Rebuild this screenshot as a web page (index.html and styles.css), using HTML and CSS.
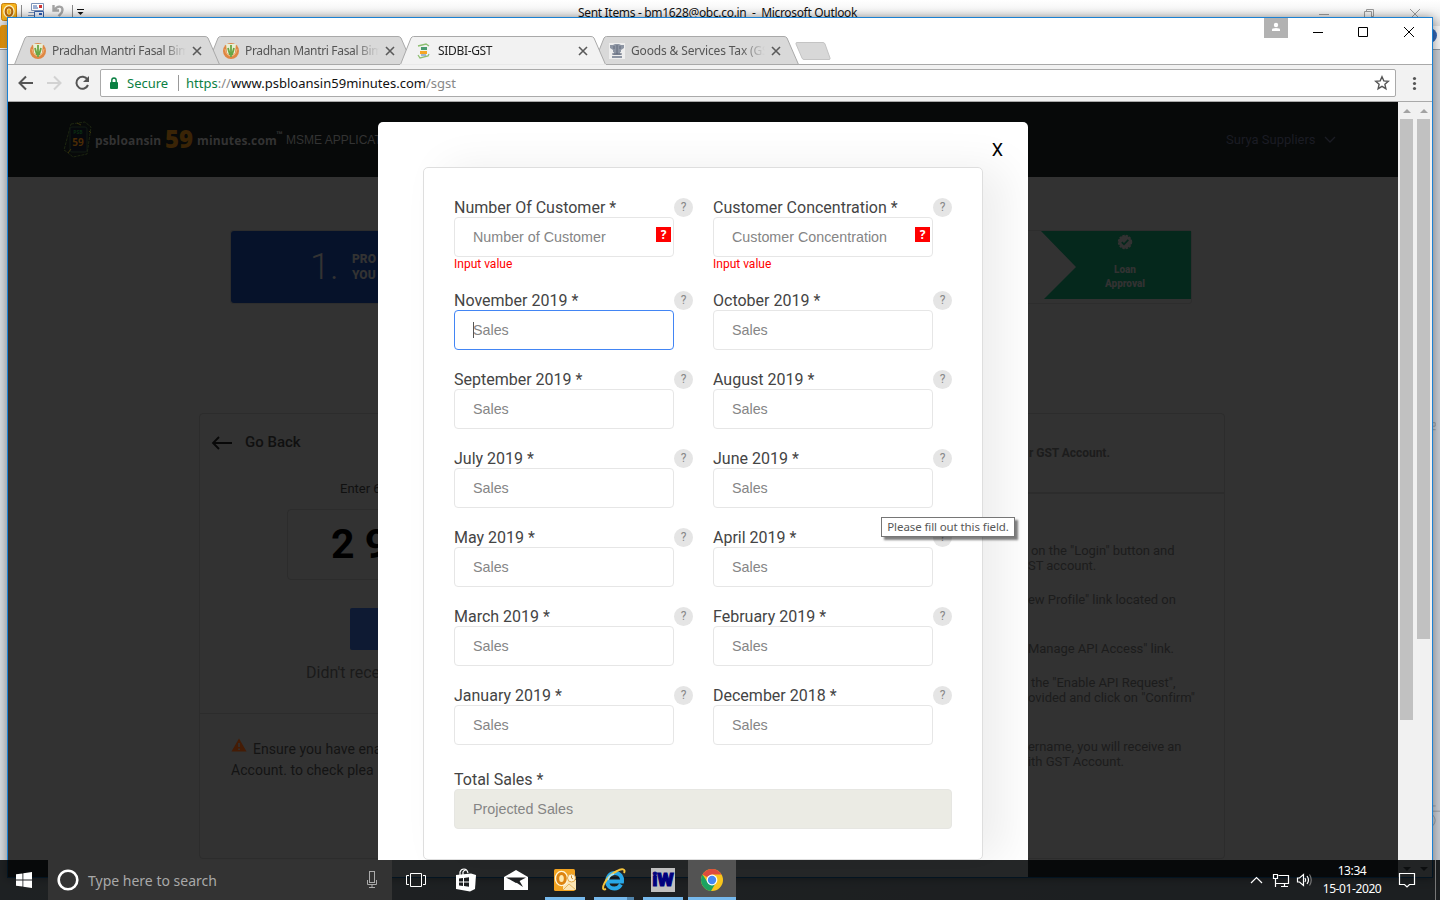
FILE: index.html
```
<!DOCTYPE html>
<html lang="en">
<head>
<meta charset="utf-8">
<title>SIDBI-GST</title>
<link rel="stylesheet" href="styles.css">
</head>
<body>
<div class="desktop">

  <div class="outlook">
    <div class="outlook-title">
      <svg class="outlook-icons" width="90" height="26" viewBox="0 0 90 26">
        <rect x="1.5" y="3.5" width="15" height="17" rx="2" fill="#f5b21b" stroke="#c77f0e"/>
        <ellipse cx="9" cy="11.500" rx="3.700" ry="4.500" fill="none" stroke="#fff6c8" stroke-width="4"/>
        <ellipse cx="9" cy="11.500" rx="3.300" ry="4.200" fill="none" stroke="#b8690a" stroke-width="2.200"/>
        <path d="M21.500 5v14M72.500 5v14" stroke="#8a8a8a"/>
        <path d="M31.500 3.500h12v7h-12zM28.500 12.500h6M28 15.500h7" fill="#fff" stroke="#7b93b8"/>
        <path d="M33 6h4M33 8h5" stroke="#3b62a8"/><rect x="39" y="5" width="3" height="3" fill="#c33"/>
        <path d="M34.500 11.500h9v8h-9z" fill="#e9effa" stroke="#3b62a8"/><rect x="39" y="13" width="3" height="2" fill="#2b58b0"/>
        <path d="M53.500 5v5.500H59M54.500 10c3-5 8-4 8 0 0 3-2 4-4 6" fill="none" stroke="#a3a3a3" stroke-width="2.400"/>
        <path d="M77 9.500h7" stroke="#111"/><path d="M77.500 12h6l-3 3z" fill="#111"/>
      </svg>
      <span class="outlook-text">Sent Items - bm1628@obc.co.in &nbsp;-&nbsp; Microsoft Outlook</span>
      <svg class="outlook-controls" width="120" height="26" viewBox="0 0 120 26" fill="none" stroke="#9a9a9a">
        <path d="M9 14.500h10M54.500 11.500h7v7h-7zM56.500 11V9.500h7v7H62M100 9l10 10M110 9l-10 10"/>
      </svg>
    </div>
    <div class="outlook-ribbon"></div>
    <div class="outlook-file"></div>
    <div class="outlook-help"></div>
    <svg class="outlook-edge" width="8" height="460" viewBox="0 0 8 460" fill="none" stroke="#8f969d"><path d="M0 4.500h2.500v4H0M0 12.500h3M0 442.500h3M0 448.500h8"/><path d="M0 453q5 6 0 12"/></svg>
  </div>

  <div class="chrome">
    <div class="titlebar">
      <div class="tabs">
        <div class="tab tab-first">
          <svg class="tab-shape" width="206" height="29" viewBox="0 0 206 29"><path d="M.5 28.500L11 2Q12 .5 13.500.5H191Q193 .5 194 2L205.500 28.500z"/></svg>
          <svg class="favicon" viewBox="0 0 16 16"><circle cx="8" cy="8" r="8" fill="#df8742"/><path d="M3 1h10l-1 9-4 4-4-4z" fill="#e8efd5"/><path d="M8 2v12M5 5l2 7M11 5l-2 7" stroke="#6aa544" stroke-width="1.800"/><path d="M2 6q1 6 5 7M14 6q-1 6-5 7" fill="none" stroke="#f2b27c"/></svg>
          <span class="tab-name">Pradhan Mantri Fasal Bim</span>
          <svg class="tab-x" viewBox="0 0 10 10"><path d="M1 1l8 8M9 1L1 9"/></svg>
        </div>
        <div class="tab tab-second">
          <svg class="tab-shape" width="206" height="29" viewBox="0 0 206 29"><path d="M.5 28.500L11 2Q12 .5 13.500.5H191Q193 .5 194 2L205.500 28.500z"/></svg>
          <svg class="favicon" viewBox="0 0 16 16"><circle cx="8" cy="8" r="8" fill="#df8742"/><path d="M3 1h10l-1 9-4 4-4-4z" fill="#e8efd5"/><path d="M8 2v12M5 5l2 7M11 5l-2 7" stroke="#6aa544" stroke-width="1.800"/><path d="M2 6q1 6 5 7M14 6q-1 6-5 7" fill="none" stroke="#f2b27c"/></svg>
          <span class="tab-name">Pradhan Mantri Fasal Bim</span>
          <svg class="tab-x" viewBox="0 0 10 10"><path d="M1 1l8 8M9 1L1 9"/></svg>
        </div>
        <div class="tab tab-active">
          <svg class="tab-shape" width="206" height="30" viewBox="0 0 206 30"><path d="M.5 28.500L11 2Q12 .5 13.500.5H191Q193 .5 194 2L205.500 28.500"/><path d="M0 29h206" class="tab-join"/></svg>
          <svg class="favicon" viewBox="0 0 16 16"><path d="M2 3l8-2 3 2M2 12l2 3 8-2 1-2" fill="none" stroke="#8dbf70" stroke-width="1.300"/><path d="M4 4h8l-1 8H4z" fill="#eef6e5"/><rect x="5" y="4" width="6" height="3" fill="#4a9a70"/><rect x="4" y="8" width="7" height="3" fill="#f5a623"/><path d="M5 12h5" stroke="#4c78b5"/></svg>
          <span class="tab-name">SIDBI-GST</span>
          <svg class="tab-x" viewBox="0 0 10 10"><path d="M1 1l8 8M9 1L1 9"/></svg>
        </div>
        <div class="tab tab-fourth">
          <svg class="tab-shape" width="206" height="29" viewBox="0 0 206 29"><path d="M.5 28.500L11 2Q12 .5 13.500.5H191Q193 .5 194 2L205.500 28.500z"/></svg>
          <svg class="favicon" viewBox="0 0 16 16"><path d="M0 0h16v16H0z" fill="#eee"/><path d="M1 2h3l2-1h4l2 1h3v3l-3 2v2h-1l1 3H4l1-3H4V7L1 5zM3 13h10v2H3z" fill="#8d95a3"/><path d="M5 3v3M11 3v3M8 2v9M3 11h10" stroke="#626b7c"/></svg>
          <span class="tab-name">Goods &amp; Services Tax (GS</span>
          <svg class="tab-x" viewBox="0 0 10 10"><path d="M1 1l8 8M9 1L1 9"/></svg>
        </div>
        <svg class="new-tab" width="36" height="19" viewBox="0 0 36 19"><path d="M2 .5h26q1.500 0 2 1.500l5 14q.5 1.500-1 1.500H9q-1.500 0-2-1.500L1 2Q.5.500 2 .5z" fill="#d8d8d8" stroke="#c4c4c4"/></svg>
      </div>
      <div class="window-controls">
        <svg class="profile" width="24" height="20" viewBox="0 0 24 20"><path d="M0 0h24v20H0z" fill="#b2b2b2"/><circle cx="12" cy="7" r="2.200" fill="#fff"/><path d="M8 13v-1.500q0-1.500 4-1.500t4 1.500V13z" fill="#fff"/></svg>
        <svg class="window-buttons" width="120" height="30" viewBox="0 0 120 30" fill="none" stroke="#000"><path d="M5 14.500h10M50.500 9.500h9v9h-9zM96 9l10 10M106 9L96 19"/></svg>
      </div>
    </div>

    <div class="toolbar">
      <svg class="nav-icons" width="92" height="36" viewBox="0 0 92 36" fill="none" stroke="#555" stroke-width="2"><path d="M25 18H12M18 11.500L11.500 18l6.500 6.500"/><path d="M39 18h13M46 11.500l6.500 6.500-6.500 6.500" stroke="#d2d2d2"/><path d="M79.500 14.500A6 6 0 1 0 80 20"/><path d="M81 11v6h-6z" fill="#555" stroke="none"/></svg>
      <div class="address">
        <svg class="lock" width="10" height="13" viewBox="0 0 10 13"><rect x="1" y="5" width="8" height="7" rx="1" fill="#0b8043"/><path d="M2.800 5V3.200a2.200 2.200 0 0 1 4.400 0V5" fill="none" stroke="#0b8043" stroke-width="1.400"/></svg>
        <span class="secure">Secure</span>
        <span class="address-sep"></span>
        <span class="url"><b class="scheme">https</b><i>://</i>www.psbloansin59minutes.com<i>/sgst</i></span>
        <svg class="star" width="16" height="16" viewBox="0 0 16 16"><path d="M8 1.800l1.800 4.100 4.500.4-3.400 3 1 4.400L8 11.400l-3.900 2.300 1-4.400-3.400-3 4.500-.4z" fill="none" stroke="#555" stroke-width="1.400"/></svg>
      </div>
      <svg class="menu-dots" width="36" height="36" viewBox="0 0 36 36" fill="#555"><circle cx="18.500" cy="13.500" r="1.600"/><circle cx="18.500" cy="18.500" r="1.600"/><circle cx="18.500" cy="23.500" r="1.600"/></svg>
    </div>

    <div class="viewport">
      <div class="page">
        <header class="site-header">
          <svg class="logo" width="30" height="38" viewBox="0 0 30 38" fill="none"><path d="M8 3l14-2 6 5-4 27-14 3L4 31 1 29z" stroke="#1c2510" stroke-dasharray="3 1"/><rect x="7" y="6" width="17" height="25" rx="2" fill="#06080c" stroke="#101a13"/><path d="M5 32l3-4M26 10l2 2M14 2l4 2" stroke="#39330a"/><text x="15" y="13" class="logo-psb">PSB</text><text x="15" y="25" class="logo-59">59</text></svg>
          <span class="brand-a">psbloansin</span>
          <span class="brand-n">59</span>
          <span class="brand-b">minutes.com</span>
          <span class="brand-tm">™</span>
          <span class="brand-app">MSME APPLICAT</span>
          <span class="user">Surya Suppliers</span>
          <svg class="chev" width="12" height="8" viewBox="0 0 12 8"><path d="M1 1l5 5 5-5" fill="none" stroke="#1b1c24" stroke-width="1.300"/></svg>
        </header>

        <div class="steps">
          <div class="step-one"><span class="step-num">1.</span><span class="step-text">PRO<br>YOU</span></div>
          <div class="step-last">
            <svg class="step-badge" width="16" height="16" viewBox="0 0 16 16"><circle cx="8" cy="8" r="6.500" fill="#323232" stroke="#323232" stroke-width="1.500" stroke-dasharray="2.400 1"/><path d="M4.800 8.200l2.200 2.200 4.300-4.500" fill="none" stroke="#05281c" stroke-width="1.700"/></svg>
            <span>Loan<br>Approval</span>
          </div>
        </div>

        <div class="cards">
          <section class="otp">
            <div class="go-back"><svg width="22" height="16" viewBox="0 0 22 16" fill="none" stroke="#080808" stroke-width="1.800"><path d="M21 9H2M8 3L2 9l6 6"/></svg><span>Go Back</span></div>
            <div class="otp-label">Enter 6</div>
            <div class="otp-box">2 9</div>
            <div class="otp-button"></div>
            <div class="otp-resend">Didn't rece</div>
            <div class="otp-note"><svg width="16" height="14" viewBox="0 0 16 14"><path d="M8 .5L15.500 13.500H.5z" fill="#451c05"/><path d="M8 5v4M8 10.500v1.500" stroke="#323232" stroke-width="1.600"/></svg>Ensure you have ena<br>Account. to check plea</div>
          </section>
          <section class="guide">
            <h2>r GST Account.</h2>
            <div class="guide-list">
              <p><span class="nudge">on the "Login" button and</span><br>ST account.</p>
              <p>ew Profile" link located on</p>
              <p class="later">Manage API Access" link.</p>
              <p><span class="nudge">the "Enable API Request",</span><br>ovided and click on "Confirm"</p>
              <p class="later">ername, you will receive an<br>ith GST Account.</p>
            </div>
          </section>
        </div>

        <div class="modal">
          <span class="modal-close">X</span>
          <div class="form-card">
            <div class="fields">
              <div class="field"><label>Number Of Customer *</label><span class="help">?</span><div class="input">Number of Customer<b class="flag">?</b></div><em>Input value</em></div>
              <div class="field"><label>Customer Concentration *</label><span class="help">?</span><div class="input">Customer Concentration<b class="flag">?</b></div><em>Input value</em></div>
              <div class="field"><label>November 2019 *</label><span class="help">?</span><div class="input focused"><i class="caret"></i>Sales</div></div>
              <div class="field"><label>October 2019 *</label><span class="help">?</span><div class="input">Sales</div></div>
              <div class="field"><label>September 2019 *</label><span class="help">?</span><div class="input">Sales</div></div>
              <div class="field"><label>August 2019 *</label><span class="help">?</span><div class="input">Sales</div></div>
              <div class="field"><label>July 2019 *</label><span class="help">?</span><div class="input">Sales</div></div>
              <div class="field"><label>June 2019 *</label><span class="help">?</span><div class="input">Sales</div></div>
              <div class="field"><label>May 2019 *</label><span class="help">?</span><div class="input">Sales</div></div>
              <div class="field"><label>April 2019 *</label><span class="help">?</span><div class="input">Sales</div></div>
              <div class="field"><label>March 2019 *</label><span class="help">?</span><div class="input">Sales</div></div>
              <div class="field"><label>February 2019 *</label><span class="help">?</span><div class="input">Sales</div></div>
              <div class="field"><label>January 2019 *</label><span class="help">?</span><div class="input">Sales</div></div>
              <div class="field"><label>December 2018 *</label><span class="help">?</span><div class="input">Sales</div></div>
            </div>
            <div class="total"><label>Total Sales *</label><div class="input projected">Projected Sales</div></div>
          </div>
        </div>
      </div>
      <div class="scroll scroll-inner"><i class="arrow-up"></i><div class="thumb"></div><i class="arrow-down"></i></div>
      <div class="scroll scroll-outer"><i class="arrow-up"></i><div class="thumb"></div><i class="arrow-down"></i></div>
    </div>
  </div>

  <div class="tooltip">Please fill out this field.</div>

  <div class="taskbar">
    <div class="start"><svg width="16" height="16" viewBox="0 0 16 16" fill="#fff"><path d="M0 2.300l6.500-.9v6.200H0zM7.300 1.300L16 0v7.600H7.300zM0 8.400h6.500v6.200L0 13.700zM7.300 8.400H16V16l-8.700-1.300z"/></svg></div>
    <div class="search">
      <svg width="22" height="22" viewBox="0 0 22 22"><circle cx="11" cy="11" r="9.300" fill="none" stroke="#fff" stroke-width="2.600"/></svg>
      <span>Type here to search</span>
      <svg class="mic" width="12" height="18" viewBox="0 0 12 18" fill="none" stroke="#aaa"><rect x="3.500" y=".5" width="5" height="11"/><path d="M1.500 9v4.500h9V9M6 14v3M3 16.500h6"/></svg>
    </div>
    <div class="app"><svg width="22" height="16" viewBox="0 0 22 16" fill="none" stroke="#fff"><path d="M5.500 1.500h11v13h-11zM4 3.500H1.500v9H4M18 3.500h2.500v9H18"/></svg></div>
    <div class="app"><svg width="22" height="24" viewBox="0 0 22 24"><path d="M5 8V4q1-3 4-3t4 4M8 7V4q1-2 3-2" fill="none" stroke="#fff" stroke-width="1.200"/><path d="M1 7l15-1.500 5 1.500-1 14-5 2.500L1 21z" fill="#fff"/><path d="M4 10.500l4-.5v3.500H4zM9 9.900l5-.6v4.200H9zM4 14.500h4V18l-4-.5zM9 14.500h5v4.200l-5-.6z" fill="#1c1e20"/></svg></div>
    <div class="app"><svg width="26" height="22" viewBox="0 0 26 22"><path d="M1 8L13 1l12 7v13H1z" fill="#fff"/><path d="M3 8.500h20L13 14z" fill="#1e2022"/><path d="M11 12l9 6-4-7z" fill="#1e2022"/></svg></div>
    <div class="app running outlook-app"><svg width="24" height="24" viewBox="0 0 24 24"><rect x="1" y="1" width="21" height="22" rx="1.500" fill="#f2a321"/><path d="M10 12h13v10H10z" fill="#fbe5b4"/><path d="M10 22l6-6 7 6" fill="none" stroke="#e5b65e"/><ellipse cx="8.500" cy="10.500" rx="4.200" ry="5.200" fill="none" stroke="#fff7d8" stroke-width="5"/><ellipse cx="8.500" cy="10.500" rx="3.800" ry="5" fill="#ffe9ad" stroke="#dd8410" stroke-width="3"/><circle cx="18.500" cy="10" r="4" fill="#fff4d6" stroke="#e1a646"/><path d="M18.500 7.500V10l1.500 1" fill="none" stroke="#d18a25"/></svg></div>
    <div class="app running stacked"><svg width="26" height="26" viewBox="0 0 26 26" fill="none"><path d="M20 17.500C18.500 20 16.500 21.500 13.500 21.500C8.500 21.500 6 18 6 14S9 6 14 6s7.500 4 7 8.500H8" stroke="#28a8e8" stroke-width="4"/><path d="M5 22C-2 25 4 10 16 4c5-3 9-2 7 2" stroke="#f4c33c" stroke-width="2"/><path d="M7 13q1-5 6-6" stroke="#9be3ff" stroke-width="1.500"/></svg></div>
    <div class="app running"><div class="iw">iW</div></div>
    <div class="app running current"><svg width="24" height="24" viewBox="0 0 24 24"><circle cx="12" cy="12" r="11" fill="#f8c51c"/><path d="M12 12L2.500 6.500A11 11 0 0 1 21.500 6.500H12z" fill="#dd4b3e"/><path d="M2.500 6.500A11 11 0 0 0 11 23l5-8.500L7.500 14z" fill="#1ca261"/><circle cx="12" cy="12" r="5.400" fill="#fff"/><circle cx="12" cy="12" r="4.200" fill="#4688f1"/></svg></div>
    <div class="tray">
      <svg width="62" height="18" viewBox="0 0 62 18" fill="none" stroke="#fff" stroke-width="1.200"><path d="M1 12l5.500-5.500L12 12"/><path d="M28.500 4.500H38.500v8H26M31 15.500h7M34.500 13v2.500M23.500 3.500h4v4h-4zM25.500 8v8"/><path d="M47.500 7v4h2l4 3.500V3.500l-4 3.500zM55 7q1.500 2 0 4M57 5q3 4 0 8"/><path d="M59.500 3.500q3.500 5.500 0 11" stroke="#777"/></svg>
      <div class="clock">13:34<br>15-01-2020</div>
      <svg class="notify" width="18" height="18" viewBox="0 0 18 18" fill="none" stroke="#fff" stroke-width="1.200"><path d="M1.500 2.500h15v11h-5L9 16l-2.500-2.500h-5z"/></svg>
      <i class="show-desktop"></i>
    </div>
  </div>
</div>
</body>
</html>
```
FILE: styles.css
```
* { box-sizing: border-box; }
body { margin: 0; font-family: Roboto, "Liberation Sans", sans-serif; }
svg { display: block; flex: none; }
i, em { font-style: normal; }
.desktop { position: relative; width: 1440px; height: 900px; overflow: hidden; background: #c9ced4; }

/* Outlook window at the back */
.outlook { position: absolute; inset: 0; background: linear-gradient(90deg, #d5dade, #c4c9d0 99%); }
.outlook-title { display: flex; justify-content: space-between; height: 26px; background: linear-gradient(#fff, #f1f1f1 60%, #dcdcdc); }
.outlook-text { width: 290px; margin-left: 46px; font: 12px/26px "Noto Sans", sans-serif; letter-spacing: -.32px; color: #111; white-space: nowrap; }
.outlook-controls { margin-right: 10px; }
.outlook-ribbon { height: 24px; background: #f2f2f2; border-bottom: 1px solid #8e959c; }
.outlook-file { position: absolute; left: 0; top: 25px; width: 8px; height: 23px; background: linear-gradient(90deg, #d98a08, #f7a91d); border-radius: 3px 0 0; }
.outlook-help { position: absolute; left: 1422px; top: 28px; width: 15px; height: 15px; border-radius: 50%; background: #3467b4; }
.outlook-edge { position: absolute; left: 1433px; top: 390px; width: 7px; }

/* Browser window */
.chrome { position: absolute; left: 7px; top: 17px; width: 1426px; height: 861px; border: 1px solid #1b81d3; background: #f2f2f2; box-shadow: 0 0 9px rgba(0,0,0,.4); }
.titlebar { display: flex; justify-content: space-between; height: 47px; background: #fff; border-bottom: 1px solid #a9a9a9; }
.tabs { display: flex; align-items: flex-start; padding: 18px 0 0 6px; }
.tab { position: relative; display: flex; align-items: center; width: 205px; height: 29px; margin-right: -12px; padding-left: 16px; font: 12px/28px "Noto Sans", sans-serif; color: #555; }
.tab-first { z-index: 2; }
.tab-second, .tab-fourth { z-index: 1; }
.tab-active { z-index: 3; color: #222; }
.tab-shape { position: absolute; left: 0; top: 0; z-index: -1; fill: #d9d9d9; stroke: #a9a9a9; }
.tab-active .tab-shape { fill: #f2f2f2; }
.tab-active .tab-join { stroke: #f2f2f2; stroke-width: 1.6; }
.favicon { width: 16px; height: 16px; margin-right: 6px; }
.tab-name { width: 134px; height: 28px; overflow: hidden; letter-spacing: -.33px; white-space: nowrap; -webkit-mask-image: linear-gradient(90deg, #000 82%, transparent); mask-image: linear-gradient(90deg, #000 82%, transparent); }
.tab-fourth .tab-name { letter-spacing: -.15px; }
.tab-x { width: 10px; height: 10px; margin-left: 6px; fill: none; stroke: #5a5a5a; stroke-width: 1.6; }
.new-tab { margin: 6px 0 0 9px; }
.window-controls { display: flex; }
.profile { margin-right: 20px; }
.window-buttons { margin-right: 4px; }
.toolbar { display: flex; align-items: center; height: 37px; border-bottom: 1px solid #a9a9a9; background: #f2f2f2; }
.address { display: flex; align-items: center; flex: 1; height: 28px; padding: 0 5px 0 8px; border: 1px solid #aaa; border-radius: 2px; background: #fff; font: 13px/26px "Noto Sans", sans-serif; }
.secure { width: 43px; margin-left: 8px; color: #0b8043; }
.address-sep { width: 1px; height: 16px; margin: 0 7px 0 8px; background: #999; }
.url { flex: 1; color: #111; letter-spacing: .02px; white-space: nowrap; }
.url i { color: #888; }
.scheme { font-weight: 400; color: #0b8043; }
.viewport { display: flex; height: 775px; }
.page { position: relative; width: 1390px; height: 775px; overflow: hidden; background: #323232; }

.scroll { display: flex; flex-direction: column; align-items: center; width: 17px; background: #f1f1f1; padding: 7px 0 6px 0; }
.arrow-up { border: 4px solid transparent; border-top: 0; border-bottom-color: #a3a3a3; }
.arrow-down { margin-top: auto; border: 4px solid transparent; border-bottom: 0; border-top-color: #555; }
.thumb { width: 13px; margin-top: 6px; background: #c1c1c1; }
.scroll-inner .thumb { height: 601px; }
.scroll-outer .thumb { height: 520px; }

/* Dimmed site behind the dialog */
.site-header { display: flex; align-items: center; height: 75px; padding: 0 62px 0 55px; background: #070909; font-size: 13px; color: #333; white-space: nowrap; }
.logo-psb { font: bold 5px "Open Sans", sans-serif; fill: #0b2d12; text-anchor: middle; }
.logo-59 { font: bold 10px "Open Sans", sans-serif; fill: #4a2b05; text-anchor: middle; }
.brand-a { width: 66px; margin: 2px 4px 0 2px; font: bold 12px "Open Sans", sans-serif; letter-spacing: .15px; }
.brand-n { width: 29px; margin-top: -2px; font: 800 24px "Open Sans", sans-serif; color: #3a2406; }
.brand-b { width: 79px; margin: 2px 0 0 3px; font: bold 12px "Open Sans", sans-serif; letter-spacing: .15px; }
.brand-tm { width: 10px; margin-top: -8px; font-size: 11px; font-weight: 700; }
.brand-app { font: 12px "Liberation Sans", sans-serif; }
.user { width: 90px; margin-left: auto; color: #1b1c24; }
.chev { margin-left: 8px; }
.steps { display: flex; justify-content: space-between; width: 962px; height: 74px; margin: 53px 0 0 222px; border: 1px solid #2d2d2d; border-radius: 3px; }
.step-one { display: flex; align-items: center; width: 200px; height: 72px; padding-left: 79px; background: #06122a; border-radius: 3px 0 0 3px; color: #333; }
.step-num { width: 42px; font-size: 36px; font-weight: 300; }
.step-text { font-size: 12px; font-weight: 900; line-height: 16px; }
.step-last { display: flex; flex-direction: column; align-items: center; width: 150px; height: 68px; padding: 3px 0 0 18px; background: #05281c; clip-path: polygon(0 0, 100% 0, 100% 100%, 3px 100%, 35px 36px); color: #323232; font-size: 10px; font-weight: 900; line-height: 14px; text-align: center; }
.step-badge { margin-bottom: 13px; }
.cards { display: flex; justify-content: space-between; width: 1026px; height: 446px; margin: 109px 0 0 191px; }
.otp, .guide { border: 1px solid #2c2c2c; border-radius: 4px; }
.otp { width: 520px; color: #191919; }
.go-back { display: flex; align-items: center; gap: 12px; height: 24px; margin: 16px 0 0 11px; font-size: 15px; font-weight: 500; color: #101010; }
.go-back span { line-height: 22px; }
.otp-label { height: 20px; margin: 25px 0 0 140px; font-size: 13px; line-height: 20px; color: #101010; }
.otp-box { width: 350px; height: 71px; margin: 10px 0 0 87px; padding-left: 43px; border: 1px solid #2c2c2c; border-radius: 4px; font-size: 41px; font-weight: 700; line-height: 68px; color: #000; }
.otp-button { width: 220px; height: 42px; margin: 28px 0 0 150px; background: #0e1a33; border-radius: 2px; }
.otp-resend { height: 64px; padding: 11px 0 0 106px; border-bottom: 1px solid #2c2c2c; font-size: 16px; line-height: 24px; color: #1a1a1a; }
.otp-note { padding: 24px 0 0 31px; font-size: 14px; line-height: 21px; letter-spacing: .05px; color: #141414; }
.otp-note svg { display: inline-block; margin-right: 6px; vertical-align: 2px; }
.guide { width: 490px; color: #1c1c1c; font-size: 13px; line-height: 15px; letter-spacing: -.04px; }
.guide h2 { height: 80px; margin: 0; padding: 32px 0 0 293px; border-bottom: 2px solid #2c2c2c; font-size: 12px; font-weight: 700; line-height: 15px; white-space: nowrap; }
.guide-list { padding: 49px 0 0 292px; white-space: nowrap; }
.guide-list p { margin: 0 0 19px; }
.guide-list .later { margin-top: 34px; }
.nudge { margin-left: 3px; }

/* Dialog */
.modal { position: absolute; left: 370px; top: 20px; width: 650px; height: 800px; padding: 45px; overflow: hidden; background: #fff; border-radius: 5px; }
.modal-close { position: absolute; right: 25px; top: 16px; font-size: 18px; line-height: 24px; color: #000; }
.form-card { width: 560px; height: 693px; padding: 29px 30px; background: #fff; border: 1px solid #dedede; border-radius: 5px; box-shadow: 22px 0 44px rgba(0,0,0,.07); }
.fields { display: grid; grid-template-columns: 239px 239px; column-gap: 20px; row-gap: 19px; }
.field { display: grid; grid-template-columns: 220px 19px; grid-template-rows: 20px 40px; }
.field em { grid-column: 1 / -1; height: 14px; font-size: 12px; line-height: 15px; color: #f00; }
label { font-size: 16px; font-weight: 400; line-height: 21px; color: #444; white-space: nowrap; }
.help { width: 19px; height: 19px; margin-top: 1px; border-radius: 50%; background: #e5e5e5; font-size: 12px; line-height: 18px; text-align: center; color: #888; }
.input { position: relative; height: 40px; padding-left: 18px; border: 1px solid #e6e6e6; border-radius: 4px; font: 14.300px/38px "Liberation Sans", sans-serif; color: #858585; white-space: nowrap; }
.focused { border-color: #4285f4; }
.flag { position: absolute; right: 2px; top: 9px; width: 15px; height: 15px; background: #f00; color: #fff; font: bold 12px/15px "Open Sans", sans-serif; text-align: center; }
.caret { position: absolute; left: 18px; top: 11px; width: 1px; height: 16px; background: #555; }
.total { margin-top: 24px; }
.total label { display: block; height: 20px; }
.projected { width: 498px; background: #ebebe4; border-color: #e6e6e2; }

.tooltip { position: absolute; left: 881px; top: 517px; width: 134px; height: 20px; border: 1px solid #767676; background: #fff; box-shadow: 3px 3px 2px rgba(0,0,0,.5); font: 11.500px/18px "Noto Sans", sans-serif; letter-spacing: -.1px; color: #575757; text-align: center; white-space: nowrap; }

/* Taskbar */
.taskbar { position: absolute; left: 0; top: 860px; display: flex; width: 1440px; height: 40px; background: rgba(0,2,4,.86); color: #fff; }
.start { display: flex; align-items: center; width: 48px; padding-left: 16px; }
.search { display: flex; align-items: center; width: 344px; padding: 0 14px 0 9px; background: #333; font: 14px/41px "Noto Sans", sans-serif; color: #a9a9a9; }
.search span { margin-left: 9px; }
.mic { margin-left: auto; }
.app { position: relative; display: flex; align-items: center; justify-content: center; width: 48px; height: 40px; margin-right: 2px; }
.running { border-bottom: 3px solid #76b9ed; width: 40px; margin: 0 5px 0 4px; padding-top: 3px; }
.outlook-app { margin-left: 3px; }
.stacked { border-image: linear-gradient(90deg, #76b9ed 78%, #5084ac 78%) 3; border-top: 0; border-left: 0; border-right: 0; }
.current { width: 48px; margin: 0; background: #535353; }
.iw { width: 24px; height: 24px; overflow: hidden; background: #c0c0c0; color: #00007d; font: 900 19px/24px Roboto, sans-serif; text-align: center; -webkit-text-stroke: 1px #00007d; }
.tray { display: flex; align-items: center; margin-left: auto; }
.clock { width: 66px; margin-left: 7px; font: 12px/18px "Noto Sans", sans-serif; letter-spacing: -.4px; text-align: center; white-space: nowrap; }
.notify { margin: 0 19px 0 13px; }
.show-desktop { width: 5px; height: 40px; border-left: 1px solid #777; }
```
